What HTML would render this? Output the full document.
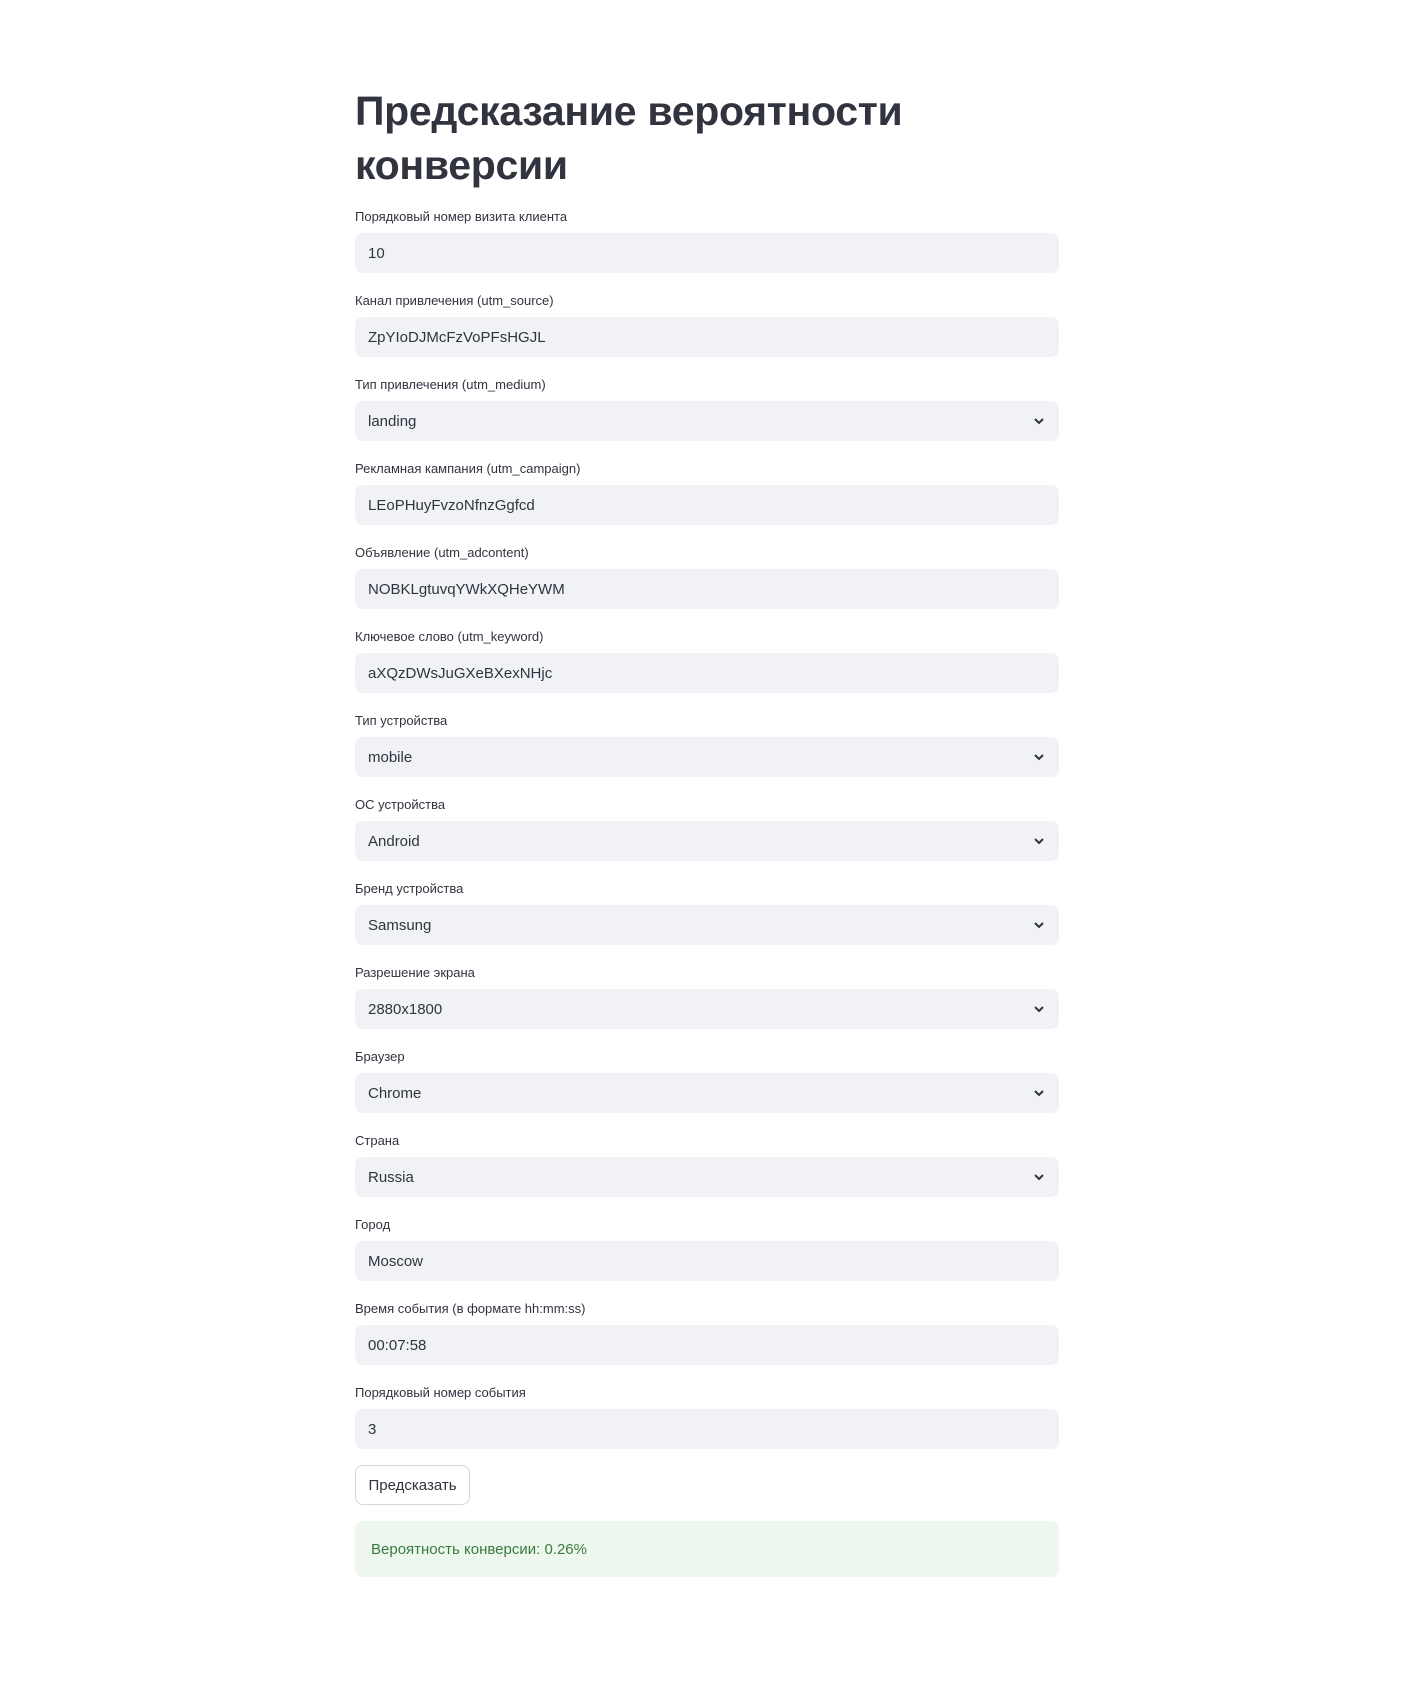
<!DOCTYPE html>
<html><head><meta charset="utf-8"><style>
*{box-sizing:border-box;margin:0;padding:0}
body{width:1428px;height:1684px;background:#fff;font-family:"Liberation Sans",sans-serif;color:#31333F;position:relative;overflow:hidden}
.wrap{position:absolute;left:355px;top:0;width:704px}
h1{position:absolute;top:84px;left:0;font-size:41px;line-height:54px;font-weight:700;color:#31333F;letter-spacing:-0.3px}
.f{position:absolute;left:0;width:704px;height:84px}
.l{font-size:13px;line-height:24px;height:29px;padding-top:1px;color:#31333F}
.i{height:40px;background:#F0F2F6;border-radius:8px;font-size:15px;line-height:42px;padding-left:13px;position:relative}
.i svg{position:absolute;right:14px;top:14px}
.btn{position:absolute;top:1465px;left:0;width:115px;height:40px;border:1px solid #D6D6D9;border-radius:8px;font-size:15px;line-height:40px;text-align:center;background:#fff}
.ok{position:absolute;top:1521px;left:0;width:704px;height:56px;background:#EDF7EE;border-radius:8px;color:#3B7A40;font-size:15px;line-height:58px;padding-left:16px}
</style></head><body><div class="wrap">
<h1>Предсказание вероятности<br>конверсии</h1>
<div class="f" style="top:204px"><div class="l">Порядковый номер визита клиента</div><div class="i">10</div></div>
<div class="f" style="top:288px"><div class="l">Канал привлечения (utm_source)</div><div class="i">ZpYIoDJMcFzVoPFsHGJL</div></div>
<div class="f" style="top:372px"><div class="l">Тип привлечения (utm_medium)</div><div class="i">landing<svg width="12" height="12" viewBox="0 0 12 12"><path d="M2 4l4 4 4-4" fill="none" stroke="#31333F" stroke-width="2"/></svg></div></div>
<div class="f" style="top:456px"><div class="l">Рекламная кампания (utm_campaign)</div><div class="i">LEoPHuyFvzoNfnzGgfcd</div></div>
<div class="f" style="top:540px"><div class="l">Объявление (utm_adcontent)</div><div class="i">NOBKLgtuvqYWkXQHeYWM</div></div>
<div class="f" style="top:624px"><div class="l">Ключевое слово (utm_keyword)</div><div class="i">aXQzDWsJuGXeBXexNHjc</div></div>
<div class="f" style="top:708px"><div class="l">Тип устройства</div><div class="i">mobile<svg width="12" height="12" viewBox="0 0 12 12"><path d="M2 4l4 4 4-4" fill="none" stroke="#31333F" stroke-width="2"/></svg></div></div>
<div class="f" style="top:792px"><div class="l">ОС устройства</div><div class="i">Android<svg width="12" height="12" viewBox="0 0 12 12"><path d="M2 4l4 4 4-4" fill="none" stroke="#31333F" stroke-width="2"/></svg></div></div>
<div class="f" style="top:876px"><div class="l">Бренд устройства</div><div class="i">Samsung<svg width="12" height="12" viewBox="0 0 12 12"><path d="M2 4l4 4 4-4" fill="none" stroke="#31333F" stroke-width="2"/></svg></div></div>
<div class="f" style="top:960px"><div class="l">Разрешение экрана</div><div class="i">2880x1800<svg width="12" height="12" viewBox="0 0 12 12"><path d="M2 4l4 4 4-4" fill="none" stroke="#31333F" stroke-width="2"/></svg></div></div>
<div class="f" style="top:1044px"><div class="l">Браузер</div><div class="i">Chrome<svg width="12" height="12" viewBox="0 0 12 12"><path d="M2 4l4 4 4-4" fill="none" stroke="#31333F" stroke-width="2"/></svg></div></div>
<div class="f" style="top:1128px"><div class="l">Страна</div><div class="i">Russia<svg width="12" height="12" viewBox="0 0 12 12"><path d="M2 4l4 4 4-4" fill="none" stroke="#31333F" stroke-width="2"/></svg></div></div>
<div class="f" style="top:1212px"><div class="l">Город</div><div class="i">Moscow</div></div>
<div class="f" style="top:1296px"><div class="l">Время события (в формате hh:mm:ss)</div><div class="i">00:07:58</div></div>
<div class="f" style="top:1380px"><div class="l">Порядковый номер события</div><div class="i">3</div></div>
<div class="btn">Предсказать</div>
<div class="ok">Вероятность конверсии: 0.26%</div>
</div></body></html>
